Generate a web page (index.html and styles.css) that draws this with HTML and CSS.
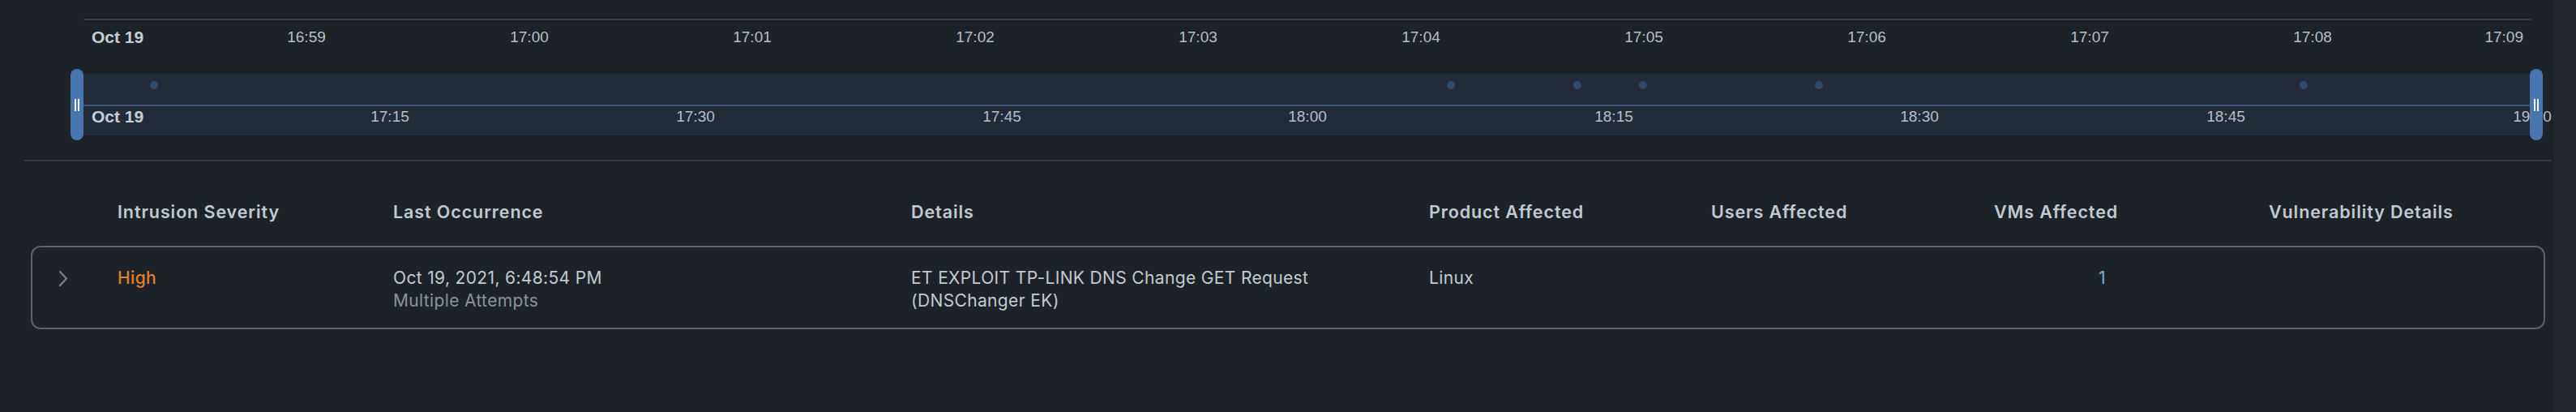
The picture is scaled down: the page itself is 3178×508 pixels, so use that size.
FILE: index.html
```html
<!DOCTYPE html>
<html lang="en">
<head>
<meta charset="utf-8">
<title>Intrusions</title>
<link rel="stylesheet" href="styles.css">
</head>
<body>
<div class="page">
  <section class="chart">
    <div class="axis">
      <span class="tick date" style="left:10px">Oct 19</span>
      <span class="tick" style="left:275px">16:59</span>
      <span class="tick" style="left:550px">17:00</span>
      <span class="tick" style="left:825px">17:01</span>
      <span class="tick" style="left:1100px">17:02</span>
      <span class="tick" style="left:1375px">17:03</span>
      <span class="tick" style="left:1650px">17:04</span>
      <span class="tick" style="left:1925px">17:05</span>
      <span class="tick" style="left:2200px">17:06</span>
      <span class="tick" style="left:2475px">17:07</span>
      <span class="tick" style="left:2750px">17:08</span>
      <span class="tick last">17:09</span>
    </div>
    <div class="brush">
      <div class="handle"><i></i><i></i></div>
      <div class="band">
        <span class="dot" style="left:87px"></span>
        <span class="dot" style="left:1687px"></span>
        <span class="dot" style="left:1843px"></span>
        <span class="dot" style="left:1924px"></span>
        <span class="dot" style="left:2141px"></span>
        <span class="dot" style="left:2739px"></span>
        <div class="band-line"></div>
        <span class="tick date low" style="left:10px">Oct 19</span>
        <span class="tick low" style="left:378px">17:15</span>
        <span class="tick low" style="left:755px">17:30</span>
        <span class="tick low" style="left:1133px">17:45</span>
        <span class="tick low" style="left:1510px">18:00</span>
        <span class="tick low" style="left:1888px">18:15</span>
        <span class="tick low" style="left:2265px">18:30</span>
        <span class="tick low" style="left:2643px">18:45</span>
        <span class="tick low" style="left:3021px">19:00</span>
      </div>
      <div class="handle"><i></i><i></i></div>
    </div>
  </section>

  <hr class="divider">

  <section class="table">
    <div class="thead grid">
      <div></div>
      <div class="th">Intrusion Severity</div>
      <div class="th">Last Occurrence</div>
      <div class="th">Details</div>
      <div class="th">Product Affected</div>
      <div class="th">Users Affected</div>
      <div class="th right">VMs Affected</div>
      <div class="th">Vulnerability Details</div>
    </div>
    <div class="row grid">
      <div class="expander">
        <svg width="12" height="21" viewBox="0 0 12 21"><polyline points="2,2 10,10.5 2,19" fill="none" stroke="#757d86" stroke-width="2.4" stroke-linecap="round" stroke-linejoin="round"/></svg>
      </div>
      <div class="td sev-high">High</div>
      <div class="td">Oct 19, 2021, 6:48:54 PM<br><span class="muted">Multiple Attempts</span></div>
      <div class="td">ET EXPLOIT TP-LINK DNS Change GET Request<br>(DNSChanger EK)</div>
      <div class="td">Linux</div>
      <div class="td"></div>
      <div class="td right vm">1</div>
      <div class="td"></div>
    </div>
  </section>
</div>
</body>
</html>
```

FILE: styles.css
```css
html, body {
  margin: 0;
  padding: 0;
}
body {
  width: 3178px;
  height: 508px;
  overflow: hidden;
  background: linear-gradient(to right, #1d2228 3150px, #21272d 3150px);
  font-family: "Liberation Sans", Arial, sans-serif;
}
.page {
  padding-top: 23px;
}

/* ---------- timeline chart ---------- */
.chart {
  margin-left: 87px;
  width: 3050px;
}
.axis {
  position: relative;
  margin-left: 16px;
  width: 3020px;
  height: 50px;
  border-top: 2px solid #3a4047;
}
.tick {
  position: absolute;
  top: 9px;
  font-size: 19px;
  line-height: 24px;
  color: #b8bec5;
  white-space: nowrap;
  transform: translateX(-50%);
}
.tick.date {
  font-size: 21px;
  font-weight: bold;
  color: #c8cdd2;
  transform: none;
}
.tick.last {
  left: auto;
  right: 10px;
  transform: none;
}
.tick.low {
  top: 41px;
}
.brush {
  display: flex;
  align-items: center;
  margin-top: 10px;
  height: 88px;
}
.handle {
  position: relative;
  z-index: 2;
  flex: 0 0 16px;
  height: 88px;
  border-radius: 8px;
  background: #4876b0;
  display: flex;
  justify-content: center;
  align-items: center;
  gap: 1.5px;
}
.handle i {
  display: block;
  width: 2px;
  height: 15px;
  background: #eef3f8;
}
.band {
  position: relative;
  flex: 1;
  height: 76px;
  background: #222c38;
}
.band-line {
  position: absolute;
  left: 0;
  right: 0;
  top: 38px;
  height: 2px;
  background: #385a82;
}
.dot {
  position: absolute;
  top: 9px;
  width: 10px;
  height: 10px;
  margin-left: -5px;
  border-radius: 50%;
  background: #2e4a6b;
}

.divider {
  margin: 24px 30px 0;
  border: 0;
  border-top: 2px solid #333a41;
  height: 0;
}

/* ---------- table ---------- */
.table {
  font-family: Inter, "Open Sans", sans-serif;
  margin: 0 38px;
}
.grid {
  display: grid;
  grid-template-columns: 105px 340px 639px 639px 348px 349px 339px 1fr;
}
.thead {
  border: 2px solid transparent;
  border-width: 0 2px;
  padding: 48px 0 28px;
}
.th {
  font-size: 21.5px;
  font-weight: 600;
  line-height: 28px;
  color: #c2c9d1;
  letter-spacing: 0.9px;
  white-space: nowrap;
}
.right {
  text-align: right;
  padding-right: 194px;
}
.row {
  border: 2px solid #5b626a;
  border-radius: 12px;
  padding: 24px 0 19px;
}
.expander {
  padding-left: 32px;
  padding-top: 4px;
}
.expander svg {
  display: block;
}
.td {
  font-size: 21px;
  font-weight: 400;
  line-height: 28px;
  color: #c5cad0;
  letter-spacing: 0.35px;
  white-space: nowrap;
}
.sev-high {
  color: #e2802c;
  font-weight: 500;
}
.muted {
  color: #8c939b;
}
.vm {
  color: #74b2dc;
  padding-right: 201px;
}
```
